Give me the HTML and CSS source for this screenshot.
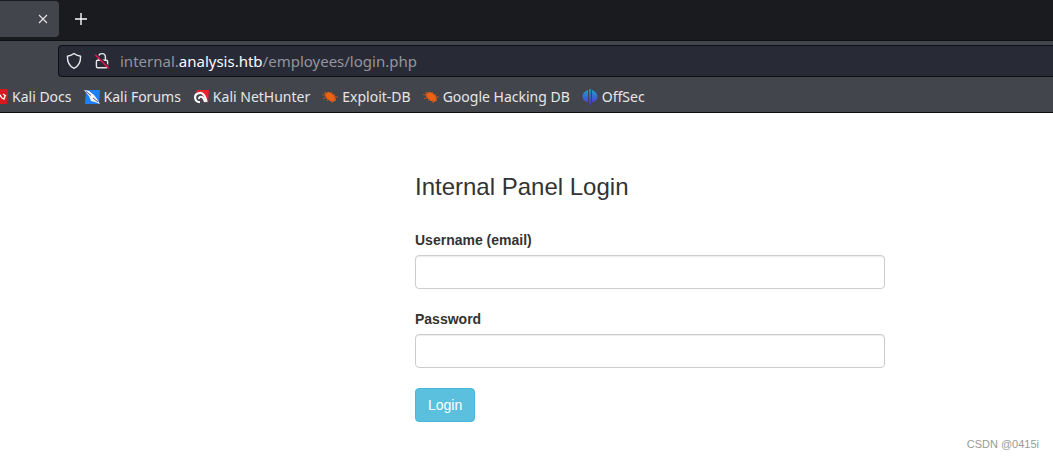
FILE: index.html
```html
<!DOCTYPE html>
<html lang="en">
<head>
<meta charset="utf-8">
<title>Internal Panel Login</title>
<link rel="stylesheet" href="styles.css">
</head>
<body>
<header class="browser">
  <div class="tabs">
    <div class="tab">
      <button class="icon-button" type="button" aria-label="Close tab">
        <svg width="10" height="10" viewBox="0 0 10 10"><path d="M1 1l8 8M9 1l-8 8" stroke="#e4e4e6" stroke-width="1.1" fill="none"/></svg>
      </button>
    </div>
    <button class="icon-button" type="button" aria-label="New tab">
      <svg width="14" height="14" viewBox="0 0 14 14"><path d="M7 1v12M1 7h12" stroke="#fbfbfe" stroke-width="1.4" fill="none"/></svg>
    </button>
  </div>
  <div class="toolbar">
    <div class="address">
      <svg width="16" height="18" viewBox="0 0 16 18"><path d="M8 1.4C9.8 3 12 3.700 14.600 4.200C14.700 9.700 12.700 14.200 8 16.300C3.300 14.200 1.300 9.700 1.400 4.200C4 3.700 6.200 3 8 1.400Z" fill="none" stroke="#e6e6e8" stroke-width="1.4" stroke-linejoin="round"/></svg>
      <svg width="16" height="18" viewBox="0 0 16 18"><path d="M4.600 8V5a3.400 3.400 0 0 1 6.800 0v3M3.700 8.200h8.600q1.300 0 1.300 1.300v5q0 1.300-1.300 1.300H3.700q-1.300 0-1.300-1.300v-5q0-1.300 1.300-1.300Z" fill="none" stroke="#e6e6e8" stroke-width="1.400"/><path d="M2.500 2.400l13 13" stroke="#282a36" stroke-width="1.500"/><path d="M1.200 2.800l13.600 13.600" stroke="#e4134f" stroke-width="1.500"/></svg>
      <span class="url">internal.<b class="domain">analysis.htb</b>/employees/login.php</span>
    </div>
  </div>
  <nav class="bookmarks">
    <a class="bookmark" href="#">
      <svg class="mark" width="16" height="16" viewBox="0 0 16 16"><path d="M0 0h14q2 0 2 2l-1 13H0Z" fill="#d81a20"/><path d="M6 7l2-1 2 3 2 1 1-3M11 5l3 2" fill="none" stroke="#fff" stroke-width="1.300"/></svg>
      Kali Docs</a>
    <a class="bookmark" href="#">
      <svg class="mark" width="16" height="16" viewBox="0 0 16 16"><path d="M2 1h14l-1 14H1Z" fill="#2080fa"/><path d="M0 1l5 1 5 4 3 4 3 5-5-2-4-1-2-5Z" fill="#f5f5f5"/><path d="M2 2.500l5 4M9 9l5 4" stroke="#555b66" stroke-width="1"/></svg>
      Kali Forums</a>
    <a class="bookmark" href="#">
      <svg class="mark" width="16" height="16" viewBox="0 0 16 16"><path d="M4 1h12l-1 13-3-2-4-7-5-1Z" fill="#e8212c"/><path d="M8 3.800Q2 4 2 8.500 2.500 13 7 13.200M8 3.800q4 1.200 5.500 9.200" fill="none" stroke="#f8f8f8" stroke-width="2.200"/><path d="M6 10q0-3 3-2 2 1 3 5" fill="none" stroke="#f8f8f8" stroke-width="2"/></svg>
      Kali NetHunter</a>
    <a class="bookmark" href="#">
      <svg class="mark" width="16" height="16" viewBox="0 0 16 16"><path d="M3 4l4-1 4 2 2 3 1 3-3 2-3-1-3-2-2-3Z" fill="#eb6215"/><path d="M0 5.500l4 1M1 10l4-2M5 12l2-2M9 3l2 3M12 5l1 3h3M12 10l2 2M10 11v3M2 3l3 2" stroke="#b9541f" stroke-width="1" fill="none"/></svg>
      Exploit-DB</a>
    <a class="bookmark" href="#">
      <svg class="mark" width="16" height="16" viewBox="0 0 16 16"><path d="M3 4l4-1 4 2 2 3 1 3-3 2-3-1-3-2-2-3Z" fill="#eb6215"/><path d="M0 5.500l4 1M1 10l4-2M5 12l2-2M9 3l2 3M12 5l1 3h3M12 10l2 2M10 11v3M2 3l3 2" stroke="#b9541f" stroke-width="1" fill="none"/></svg>
      Google Hacking DB</a>
    <a class="bookmark" href="#">
      <svg class="mark" width="16" height="16" viewBox="0 0 16 16"><defs><linearGradient id="fade" x1="0" y1="0" x2="0" y2="1"><stop offset="0" stop-color="#19a7c8"/><stop offset="1" stop-color="#5a2bd8"/></linearGradient></defs><path d="M6 1v12.500Q.5 12 .5 7.500.5 3 6 1ZM10 1v12.500Q15.500 12 15.500 7.500 15.500 3 10 1ZM7.200 0h1.600v16H7.200Z" fill="url(#fade)"/></svg>
      OffSec</a>
  </nav>
</header>
<main class="page">
  <form class="login">
    <h1 class="title">Internal Panel Login</h1>
    <div class="field">
      <label class="label" for="username">Username (email)</label>
      <input class="input" id="username" type="text">
    </div>
    <div class="field">
      <label class="label" for="password">Password</label>
      <input class="input" id="password" type="password">
    </div>
    <button class="submit" type="button">Login</button>
  </form>
  <footer class="credit">CSDN @0415i</footer>
</main>
</body>
</html>
```
FILE: styles.css
```css
* { box-sizing: border-box; }
body {
  margin: 0;
  min-height: 100vh;
  display: flex;
  flex-direction: column;
  background: #fff;
  color: #333;
  font: 14px/20px "Liberation Sans", Arial, sans-serif;
}
svg { display: block; flex: none; }
.browser {
  background: #42454c;
  border-bottom: 1px solid #0c0c0d;
  font-family: "Noto Sans", sans-serif;
}
.tabs {
  display: flex;
  align-items: center;
  gap: 14px;
  height: 41px;
  padding-bottom: 2px;
  background: #1a1b1f;
  border-bottom: 1px solid #0f1013;
}
.tab {
  display: flex;
  align-items: center;
  justify-content: flex-end;
  width: 59px;
  height: 36px;
  padding-right: 10px;
  background: #42454c;
  border-radius: 0 4px 4px 0;
}
.icon-button {
  display: flex;
  padding: 1px;
  border: 0;
  background: none;
}
.toolbar { padding: 4px 0 4px 58px; }
.address {
  display: flex;
  align-items: center;
  gap: 12px;
  height: 32px;
  padding-left: 7px;
  background: #282a36;
  border: 1px solid #0f1013;
  border-right: 0;
  border-radius: 4px 0 0 4px;
}
.url { margin-left: -2px; color: #94959b; font-size: 15px; white-space: nowrap; }
.domain { color: #fbfbfe; font-weight: 400; }
.bookmarks {
  display: flex;
  align-items: center;
  gap: 12px;
  height: 31px;
  margin-left: -8px;
  overflow: hidden;
}
.bookmark {
  display: flex;
  align-items: center;
  gap: 4px;
  color: #e6e6e8;
  font-size: 14px;
  text-decoration: none;
  white-space: nowrap;
}
.page {
  flex: 1;
  display: flex;
  flex-direction: column;
  justify-content: space-between;
  padding: 60px 14px 4px;
}
.login {
  width: 100%;
  max-width: 871px;
  padding-left: 401px;
}
.title { margin: 0 0 29px; font-size: 24px; line-height: 28px; font-weight: 400; }
.field { margin-bottom: 20px; }
.label { display: block; margin-bottom: 5px; font-weight: 700; }
.input {
  display: block;
  width: 100%;
  height: 34px;
  padding: 6px 12px;
  border: 1px solid #ccc;
  border-radius: 4px;
  background: #fff;
  box-shadow: inset 0 1px 1px rgba(0, 0, 0, 0.075);
}
.submit {
  padding: 6px 12px;
  border: 1px solid #46b8da;
  border-radius: 4px;
  background: #5bc0de;
  color: #fff;
  font: inherit;
}
.credit {
  align-self: flex-end;
  color: #999;
  font-size: 11px;
}
```
